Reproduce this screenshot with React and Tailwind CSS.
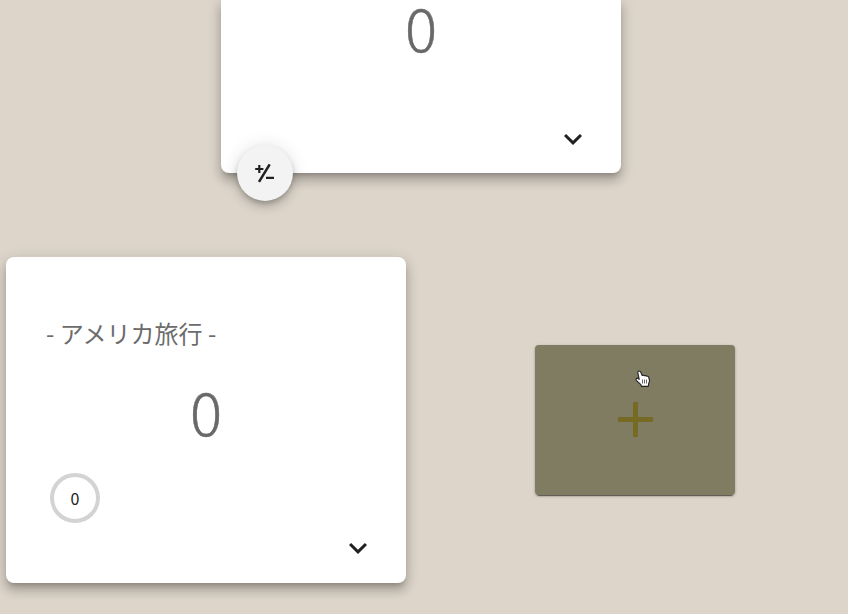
const cardShadow =
  "shadow-[0_5px_5px_-3px_rgba(0,0,0,0.2),0_8px_10px_1px_rgba(0,0,0,0.14),0_3px_14px_2px_rgba(0,0,0,0.12)]";

function ExpandIcon() {
  return (
    <svg viewBox="0 0 24 24" className="size-9 fill-[#212121]">
      <path d="M16.59 8.59 12 13.17 7.41 8.59 6 10l6 6 6-6z" />
    </svg>
  );
}

function PlusMinusIcon() {
  return (
    <svg viewBox="0 0 24 24" className="size-6" fill="none" stroke="#212121" strokeWidth="2.2">
      <path d="M2.2 8h8.2M6.3 4v8M13 16.8h8" />
      <path d="M6 20.9 16.700 3.300" strokeWidth="2.5" />
    </svg>
  );
}

function HandCursor() {
  return (
    <svg viewBox="0 0 16 18" className="absolute left-[100px] top-[25px] h-[18px] w-4">
      <path
        d="M3.600 1.200C4.500.8 5.400 1.200 5.700 2l1.500 3.500c.6-.5 1.600-.4 2 .2.700-.4 1.600-.3 2 .5.900-.4 2.300 0 2.500 1l.8 3.300c.1 1.300-.3 2.100-.9 3.300l-.3 2.600H6.400l-.5-1.700L1.300 10.300c-.6-1-.1-2 .7-2.200.8-.1 1.400.4 2.200 1.200L2.800 2.700c-.1-.7.200-1.200.8-1.500z"
        fill="#fff"
        stroke="#222"
        strokeWidth="1.1"
        strokeLinejoin="round"
      />
      <path d="M7.500 9.500v4M9.500 9.500v4M11.500 9.500v4" stroke="#222" strokeWidth="0.7" />
    </svg>
  );
}

function Amount({ children }) {
  return (
    <p className="text-center text-[60px] leading-[52px] font-light text-[#696969] [-webkit-text-stroke:0.5px_#696969]">
      {children}
    </p>
  );
}

export default function App() {
  return (
    <main className="h-[614px] w-[848px] overflow-hidden bg-[#ddd5ca] font-['Noto_Sans_CJK_JP',sans-serif]">
      <section className={`relative ml-[221px] flex h-[173px] w-[400px] flex-col rounded-b-lg bg-white ${cardShadow}`}>
        <Amount>0</Amount>
        <div className="mt-auto mr-[30.5px] mb-[16.5px] flex justify-end">
          <ExpandIcon />
        </div>
        <button className="absolute -bottom-7 left-4 flex size-14 items-center justify-center rounded-full bg-[#f3f3f3] shadow-[0_3px_5px_-1px_rgba(0,0,0,0.2),0_6px_10px_0_rgba(0,0,0,0.14),0_1px_18px_0_rgba(0,0,0,0.12)]">
          <PlusMinusIcon />
        </button>
      </section>

      <div className="mt-[84px] ml-[6px] flex items-center">
        <section className={`flex h-[326px] w-[400px] flex-col rounded-lg bg-white ${cardShadow}`}>
          <h2 className="mt-[60px] ml-10 text-2xl leading-8 text-[#6c6c6c]">- アメリカ旅行 -</h2>
          <div className="mt-[35px]">
            <Amount>0</Amount>
          </div>
          <div className="mt-[37px] ml-11 flex size-[50px] items-center justify-center rounded-full border-4 border-[#d3d3d3] text-base text-[#212121]">
            0
          </div>
          <div className="mt-auto mr-[30px] mb-[17px] flex justify-end">
            <ExpandIcon />
          </div>
        </section>

        <button className="relative ml-[129px] flex h-[150px] w-[200px] items-center justify-center rounded bg-[#807c62] shadow-[0_3px_1px_-2px_rgba(0,0,0,0.5),0_1px_3px_0_rgba(0,0,0,0.3)]">
          <svg viewBox="0 0 35 35" className="mb-[2px] size-[35px] fill-[#776a25]">
            <path d="M15 0h5v15h15v5H20v15h-5V20H0v-5h15z" />
          </svg>
          <HandCursor />
        </button>
      </div>
    </main>
  );
}
